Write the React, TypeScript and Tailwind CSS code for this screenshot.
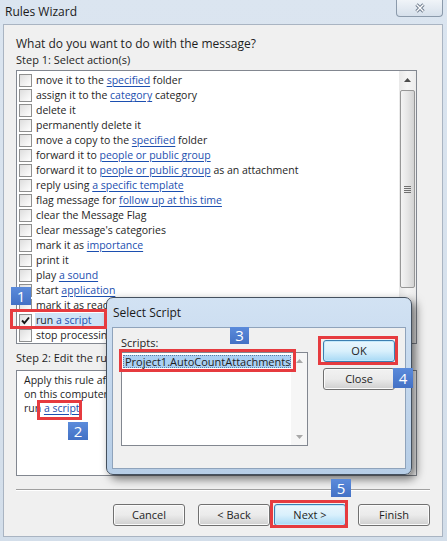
import React from 'react';

type Seg = string | { link: string };

const actions: Seg[][] = [
  ['move it to the ', { link: 'specified' }, ' folder'],
  ['assign it to the ', { link: 'category' }, ' category'],
  ['delete it'],
  ['permanently delete it'],
  ['move a copy to the ', { link: 'specified' }, ' folder'],
  ['forward it to ', { link: 'people or public group' }],
  ['forward it to ', { link: 'people or public group' }, ' as an attachment'],
  ['reply using ', { link: 'a specific template' }],
  ['flag message for ', { link: 'follow up at this time' }],
  ['clear the Message Flag'],
  ["clear message's categories"],
  ['mark it as ', { link: 'importance' }],
  ['print it'],
  ['play ', { link: 'a sound' }],
  ['start ', { link: 'application' }],
  ['mark it as read'],
  ['run ', { link: 'a script' }],
  ['stop processing more rules'],
];

const linkCls = 'text-[#1c4fb0] underline underline-offset-[2px] decoration-[1px]';

function Segs({ segs }: { segs: Seg[] }) {
  return (
    <>
      {segs.map((s, i) =>
        typeof s === 'string' ? (
          <span key={i}>{s}</span>
        ) : (
          <span key={i} className={linkCls}>
            {s.link}
          </span>
        ),
      )}
    </>
  );
}

function Checkbox({ checked }: { checked?: boolean }) {
  return (
    <div className="flex h-[13px] w-[13px] shrink-0 items-center justify-center border border-[#8e8f8f] bg-linear-to-br from-[#dedede] to-white">
      {checked && (
        <svg width="9" height="9" viewBox="0 0 9 9">
          <path d="M1 4.5 L3.4 7 L8 1.5" fill="none" stroke="#151515" strokeWidth="1.9" />
        </svg>
      )}
    </div>
  );
}

function WinButton({ label, primary, className = '' }: { label: string; primary?: boolean; className?: string }) {
  const skin = primary
    ? 'border-[#3c7fb1] bg-linear-to-b from-[#eaf6fd] via-[#d9f0fc] to-[#a7d9f5] shadow-[inset_0_0_0_1px_#c4e9fc]'
    : 'border-[#707070] bg-linear-to-b from-[#f2f2f2] via-[#ebebeb] to-[#cfcfcf] shadow-[inset_0_0_0_1px_#fbfbfb]';
  return (
    <div className={`flex h-[22px] w-[72px] items-center justify-center rounded-[3px] border text-[11px] ${skin} ${className}`}>
      {label}
    </div>
  );
}

function Arrow({ up, light }: { up?: boolean; light?: boolean }) {
  return (
    <svg width="7" height="4" viewBox="0 0 7 4">
      <path d={up ? 'M0 4 L3.5 0 L7 4 Z' : 'M0 0 L3.5 4 L7 0 Z'} fill={light ? '#a8a8a8' : '#4d4d4d'} />
    </svg>
  );
}

function Badge({ n, className }: { n: number; className: string }) {
  return (
    <div
      className={`absolute flex items-center justify-center bg-linear-to-b from-[#5b8bdb] to-[#4371c5] text-[15px] leading-none text-white ${className}`}
    >
      {n}
    </div>
  );
}

export default function App() {
  return (
    <div className="relative h-[541px] w-[447px] overflow-hidden bg-linear-to-b from-[#dbe5f0] to-[#d3deea] font-['Open_Sans',sans-serif] text-[11px] text-[#1e1e1e]">
      {/* title bar */}
      <div className="flex h-[24px] justify-between">
        <div className="ml-[5px] flex items-center text-[12px] text-[#1a1a1a]">Rules Wizard</div>
        <div className="mr-[4px] flex h-[17px] w-[47px] items-center justify-center rounded-b-[4px] border border-t-0 border-[#8b9aab] bg-linear-to-b from-[#f0f4f8] to-[#d6e0eb]">
          <svg width="14" height="10" viewBox="0 0 14 10">
            <path d="M3.5 1.5 L10.5 8.5 M10.5 1.5 L3.5 8.5" stroke="#707e8f" strokeWidth="3.2" />
            <path d="M3.5 1.5 L10.5 8.5 M10.5 1.5 L3.5 8.5" stroke="#ffffff" strokeWidth="1.4" />
          </svg>
        </div>
      </div>

      {/* client area */}
      <div className="ml-[3px] flex h-[513px] w-[440px] flex-col border border-[#a9b4c2] bg-[#f0f0f0] pl-[12px] pt-[11px]">
        <div className="text-[12px] leading-[16px]">What do you want to do with the message?</div>
        <div className="leading-[16px]">Step 1: Select action(s)</div>

        <div className="mt-[2px] flex h-[274px] w-[401px] border border-[#828790] bg-white">
          <div className="flex-1 overflow-hidden pt-[2px] text-[10.5px]">
            {actions.map((segs, i) => {
              const selected = i === 16;
              return (
                <div key={i} className="flex h-[15px] items-center pl-[2px]">
                  <Checkbox checked={selected} />
                  <div className={`ml-[3px] h-[15px] flex-1 whitespace-nowrap pl-[1px] leading-[15px] ${selected ? 'bg-[#cfe4f7]' : ''}`}>
                    <Segs segs={segs} />
                  </div>
                </div>
              );
            })}
          </div>
          {/* scrollbar */}
          <div className="flex w-[17px] flex-col bg-linear-to-r from-[#e9e9e9] via-[#f5f5f5] to-[#ececec]">
            <div className="flex h-[17px] items-center justify-center">
              <Arrow up />
            </div>
            <div className="mx-[1px] mt-[2px] flex h-[198px] items-center justify-center rounded-[2px] border border-[#979797] bg-linear-to-r from-[#f4f4f4] via-[#e6e6e6] to-[#d3d3d3]">
              <div className="flex flex-col gap-[1px]">
                <div className="h-px w-[7px] bg-[#6f6f6f]" />
                <div className="h-px w-[7px] bg-[#6f6f6f]" />
                <div className="h-px w-[7px] bg-[#6f6f6f]" />
                <div className="h-px w-[7px] bg-[#6f6f6f]" />
              </div>
            </div>
          </div>
        </div>

        <div className="mt-[6px] whitespace-nowrap leading-[16px]">Step 2: Edit the rule description (click an underlined value)</div>
        <div className="mt-[4px] h-[106px] w-[401px] border border-[#828790] bg-white pl-[7px] pt-[2px] text-[10.5px] leading-[14px]">
          <div className="whitespace-nowrap">Apply this rule after the message arrives</div>
          <div className="whitespace-nowrap">on this computer only</div>
          <div>
            run <span className={linkCls}>a script</span>
          </div>
        </div>

        <div className="mt-[13px] w-[414px] border-t border-b border-t-[#a0a0a0] border-b-white" />

        <div className="mt-[13px] flex pl-[97px]">
          <WinButton label="Cancel" className="mr-[13px]" />
          <WinButton label="< Back" className="mr-[4px]" />
          <WinButton label="Next >" primary className="mr-[12px]" />
          <WinButton label="Finish" />
        </div>
      </div>

      {/* Select Script dialog */}
      <div className="absolute left-[106px] top-[297px] flex h-[178px] w-[306px] flex-col rounded-[7px] border border-[#44505e] bg-linear-to-b from-[#d2e2f3] via-[#c3d7ed] to-[#b6cde6] shadow-[4px_4px_10px_rgba(0,0,0,0.55)]">
        <div className="flex h-[29px] items-center pl-[6px] text-[12px] text-[#1a1a1a]">Select Script</div>
        <div className="mx-[5px] flex h-[142px] border border-[#8fa3bb] bg-[#f0f0f0] pl-[8px] pt-[7px]">
          <div className="flex flex-col">
            <div className="leading-[16px]">Scripts:</div>
            <div className="mt-[1px] flex h-[94px] w-[187px] border border-[#828790] bg-white">
              <div className="flex-1 pl-[1px] pt-[2px]">
                <div className="h-[13px] whitespace-nowrap border border-dotted border-[#5a7da6] bg-[#a9d0f3] pl-[1px] leading-[11px]">
                  Project1.AutoCountAttachments
                </div>
              </div>
              <div className="flex w-[16px] flex-col justify-between bg-[#f6f6f6]">
                <div className="flex h-[16px] items-center justify-center">
                  <Arrow up light />
                </div>
                <div className="flex h-[16px] items-center justify-center">
                  <Arrow light />
                </div>
              </div>
            </div>
          </div>
          <div className="ml-[15px] flex flex-col pt-[5px]">
            <WinButton label="OK" primary className="w-[70px]" />
            <WinButton label="Close" className="mt-[6px] w-[70px]" />
          </div>
        </div>
      </div>

      {/* annotations */}
      <div className="absolute left-[10px] top-[309px] h-[20px] w-[97px] border-[3px] border-[#e63b3f]" />
      <div className="absolute left-[37px] top-[400px] h-[20px] w-[45px] border-[3px] border-[#e63b3f]" />
      <div className="absolute left-[119px] top-[349px] h-[23px] w-[177px] border-[3px] border-[#e63b3f]" />
      <div className="absolute left-[318px] top-[336px] h-[29px] w-[80px] border-[3px] border-[#e63b3f]" />
      <div className="absolute left-[270px] top-[500px] h-[28px] w-[78px] border-[3px] border-[#e63b3f]" />

      <Badge n={1} className="left-[11px] top-[287px] h-[18px] w-[20px]" />
      <Badge n={2} className="left-[68px] top-[422px] h-[18px] w-[20px]" />
      <Badge n={3} className="left-[230px] top-[327px] h-[17px] w-[19px]" />
      <Badge n={4} className="left-[393px] top-[368px] h-[20px] w-[20px]" />
      <Badge n={5} className="left-[331px] top-[479px] h-[18px] w-[20px]" />
    </div>
  );
}
